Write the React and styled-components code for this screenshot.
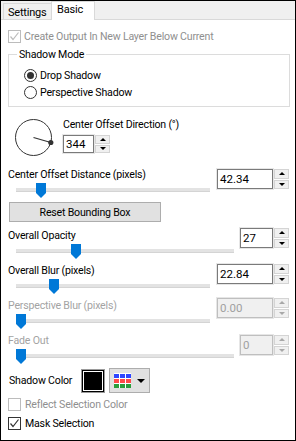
import styled, { createGlobalStyle } from "styled-components";

const GlobalStyle = createGlobalStyle`
  body {
    margin: 0;
    font-family: Roboto, "Liberation Sans", Arial, sans-serif;
    font-size: 10.6px;
    letter-spacing: -0.2px;
    color: #000;
  }
`;

const Window = styled.div`
  width: 296px;
  height: 441px;
  box-sizing: border-box;
  border: 1px solid #000;
  background: #f0f0f0;
  display: flex;
  flex-direction: column;
`;

const TabBar = styled.div`
  height: 18px;
  display: flex;
  align-items: flex-end;
  padding-left: 2px;
  border-bottom: 1px solid #d9d9d9;
`;

const Tab = styled.div`
  box-sizing: border-box;
  width: ${(p) => p.$width}px;
  height: ${(p) => (p.$active ? 19 : 16)}px;
  margin-bottom: ${(p) => (p.$active ? -1 : 0)}px;
  padding-left: ${(p) => p.$pad}px;
  padding-top: ${(p) => (p.$active ? 1 : 2)}px;
  line-height: 13px;
  font-size: 11px;
  white-space: nowrap;
  background: ${(p) => (p.$active ? "#fff" : "#f0f0f0")};
  border: 1px solid #d9d9d9;
  border-bottom: none;
  ${(p) => (p.$active ? "" : "border-right: none;")}
`;

const Panel = styled.div`
  flex: 1;
  background: #fff;
  padding: 0 6px 0 7px;
  display: flex;
  flex-direction: column;
`;

const CheckRow = styled.label`
  display: flex;
  align-items: center;
  gap: ${(p) => p.$gap || 3}px;
  height: 13px;
  margin-top: ${(p) => p.$top}px;
  color: ${(p) => (p.$disabled ? "#8f8f8f" : "#000")};
  white-space: nowrap;
`;

const Box = styled.span`
  box-sizing: border-box;
  width: 13px;
  height: 13px;
  border: 1px solid ${(p) => (p.$disabled ? "#bcbcbc" : "#333")};
  background: #fff;
  display: flex;
  align-items: center;
  justify-content: center;
`;

const Check = ({ color }) => (
  <svg width="11" height="11" viewBox="0 0 11 11">
    <path d="M1.5 5.5 L4 8.5 L9.5 1.5" fill="none" stroke={color} strokeWidth="1.2" />
  </svg>
);

const Group = styled.fieldset`
  margin: 5px 0 0 0;
  width: 282px;
  box-sizing: border-box;
  border: 1px solid #dcdcdc;
  padding: 6px 0 5px 15px;
  display: flex;
  flex-direction: column;
`;

const Legend = styled.legend`
  padding: 0 2px;
  margin-left: -7px;
  line-height: 13px;
`;

const RadioRow = styled.label`
  display: flex;
  align-items: center;
  gap: 3px;
  height: 17px;
`;

const RadioCircle = styled.span`
  box-sizing: border-box;
  width: 13px;
  height: 13px;
  border-radius: 50%;
  border: 1px solid #333;
  display: flex;
  align-items: center;
  justify-content: center;
  &::after {
    content: "";
    width: 7px;
    height: 7px;
    border-radius: 50%;
    background: ${(p) => (p.$on ? "#333" : "transparent")};
  }
`;

const DialRow = styled.div`
  display: flex;
  margin-top: 11px;
  gap: 8px;
`;

const DialArt = styled.svg`
  margin: 1px 0 0 7px;
  flex: none;
`;

const DialSide = styled.div`
  display: flex;
  flex-direction: column;
  gap: 3px;
`;

const Label = styled.div`
  height: 14px;
  line-height: 14px;
  white-space: nowrap;
  color: ${(p) => (p.$disabled ? "#a3a3a3" : "#000")};
`;

const Block = styled.div`
  display: flex;
  justify-content: space-between;
  align-items: flex-start;
  margin-top: ${(p) => p.$top}px;
`;

const LeftCol = styled.div`
  display: flex;
  flex-direction: column;
`;

const SliderWrap = styled.div`
  position: relative;
  height: 15px;
  margin-left: 8px;
  width: ${(p) => p.$width}px;
`;

const Track = styled.div`
  margin-top: 6px;
  height: 3px;
  background: #e3e3e3;
  border-bottom: 1px solid #d4d4d4;
`;

const Thumb = styled.div`
  position: absolute;
  top: 1px;
  width: 10px;
  height: 15px;
  background: #0078d7;
  clip-path: polygon(0 0, 100% 0, 100% 66%, 50% 100%, 0 66%);
`;

const Slider = ({ width, at }) => (
  <SliderWrap $width={width}>
    <Track />
    <Thumb style={{ left: at }} />
  </SliderWrap>
);

const Spin = styled.div`
  display: flex;
  gap: 1px;
  margin-top: ${(p) => p.$top || 0}px;
`;

const SpinInput = styled.div`
  box-sizing: border-box;
  width: ${(p) => p.$width}px;
  height: ${(p) => p.$h}px;
  border: 1px solid ${(p) => (p.$disabled ? "#bfbfbf" : "#7a7a7a")};
  box-shadow: 0 0 0 1px #e6e6e6;
  background: ${(p) => (p.$disabled ? "#f0f0f0" : "#fff")};
  color: ${(p) => (p.$disabled ? "#a0a0a0" : "#000")};
  font-size: 11.5px;
  letter-spacing: 0;
  line-height: ${(p) => p.$h - 2}px;
  padding-left: 2px;
`;

const SpinButtons = styled.div`
  display: flex;
  flex-direction: column;
  gap: 1px;
  width: 15px;
  height: ${(p) => p.$h}px;
`;

const SpinBtn = styled.div`
  flex: 1;
  box-sizing: border-box;
  background: #f0f0f0;
  border: 1px solid #d4d4d4;
  display: flex;
  align-items: center;
  justify-content: center;
  &::after {
    content: "";
    border-left: 3px solid transparent;
    border-right: 3px solid transparent;
    ${(p) => (p.$up ? "border-bottom" : "border-top")}: 3px solid ${(p) =>
      p.$disabled ? "#a8a8a8" : "#000"};
  }
`;

const SpinBox = ({ value, width, h = 20, disabled, top }) => (
  <Spin $top={top}>
    <SpinInput $width={width} $h={h} $disabled={disabled}>
      {value}
    </SpinInput>
    <SpinButtons $h={h}>
      <SpinBtn $up $disabled={disabled} />
      <SpinBtn $disabled={disabled} />
    </SpinButtons>
  </Spin>
);

const ResetButton = styled.button`
  margin: 5px 0 0 1px;
  width: 152px;
  height: 20px;
  box-sizing: border-box;
  background: #e1e1e1;
  border: 1px solid #adadad;
  font-family: inherit;
  font-size: inherit;
  letter-spacing: inherit;
  padding: 0;
  color: #000;
`;

const ColorRow = styled.div`
  display: flex;
  align-items: center;
  height: 25px;
  margin-top: 5px;
  padding-left: 1px;
`;

const ColorLabel = styled.span`
  width: 72px;
  white-space: nowrap;
`;

const Swatch = styled.div`
  box-sizing: border-box;
  width: 24px;
  height: 24px;
  background: #000;
  border: 2px solid #000;
  box-shadow: inset 0 0 0 1px #fff;
  outline: 1px solid #9a9a9a;
  outline-offset: -1px;
`;

const PaletteButton = styled.div`
  box-sizing: border-box;
  margin-left: 4px;
  width: 41px;
  height: 25px;
  background: #e1e1e1;
  border: 1px solid #adadad;
  display: flex;
  align-items: center;
  padding-left: 4px;
  gap: 6px;
`;

const Arrow = styled.span`
  border-left: 4px solid transparent;
  border-right: 4px solid transparent;
  border-top: 4px solid #000;
`;

const PaletteIcon = () => {
  const rows = ["#2e46ff", "#ff4a4a", "#2a9d3c"];
  return (
    <svg width="17" height="15" viewBox="0 0 17 15">
      <rect width="17" height="15" fill="#fff" />
      {rows.map((c, r) =>
        [0, 1, 2].map((col) => (
          <rect key={`${r}-${col}`} x={col * 6} y={r * 5 + 1} width="5" height="4" fill={c} />
        ))
      )}
    </svg>
  );
};

const App = () => {
  return (
    <>
      <GlobalStyle />
      <Window>
        <TabBar>
          <Tab $width={48} $pad={4}>Settings</Tab>
          <Tab $active $width={44} $pad={5}>Basic</Tab>
        </TabBar>
        <Panel>
          <CheckRow $top={10} $disabled>
            <Box $disabled>
              <Check color="#bcbcbc" />
            </Box>
            Create Output In New Layer Below Current
          </CheckRow>
          <Group>
            <Legend>Shadow Mode</Legend>
            <RadioRow>
              <RadioCircle $on />
              Drop Shadow
            </RadioRow>
            <RadioRow>
              <RadioCircle />
              Perspective Shadow
            </RadioRow>
          </Group>
          <DialRow>
            <DialArt width="40" height="40" viewBox="0 0 40 40">
              <circle cx="18.5" cy="18.5" r="18" fill="none" stroke="#333" strokeWidth="1" />
              <line x1="18.5" y1="18.5" x2="35.8" y2="23.5" stroke="#333" strokeWidth="1.2" />
              <circle cx="35.8" cy="23.5" r="2.6" fill="#333" />
            </DialArt>
            <DialSide>
              <Label>Center Offset Direction (°)</Label>
              <SpinBox value="344" width={31} h={18} />
            </DialSide>
          </DialRow>
          <Block $top={9}>
            <LeftCol>
              <Label>Center Offset Distance (pixels)</Label>
              <Slider width={194} at={20} />
            </LeftCol>
            <SpinBox value="42.34" width={56} top={1} />
          </Block>
          <ResetButton>Reset Bounding Box</ResetButton>
          <Block $top={7}>
            <LeftCol>
              <Label>Overall Opacity</Label>
              <Slider width={218} at={55} />
            </LeftCol>
            <SpinBox value="27" width={33} top={-1} />
          </Block>
          <Block $top={6}>
            <LeftCol>
              <Label>Overall Blur (pixels)</Label>
              <Slider width={194} at={33} />
            </LeftCol>
            <SpinBox value="22.84" width={56} />
          </Block>
          <Block $top={6}>
            <LeftCol>
              <Label $disabled>Perspective Blur (pixels)</Label>
              <Slider width={194} at={0} />
            </LeftCol>
            <SpinBox value="0.00" width={56} disabled top={-1} />
          </Block>
          <Block $top={6}>
            <LeftCol>
              <Label $disabled>Fade Out</Label>
              <Slider width={218} at={0} />
            </LeftCol>
            <SpinBox value="0" width={33} disabled top={1} />
          </Block>
          <ColorRow>
            <ColorLabel>Shadow Color</ColorLabel>
            <Swatch />
            <PaletteButton>
              <PaletteIcon />
              <Arrow />
            </PaletteButton>
          </ColorRow>
          <CheckRow $top={5} $disabled $gap={4}>
            <Box $disabled />
            Reflect Selection Color
          </CheckRow>
          <CheckRow $top={6} $gap={4}>
            <Box>
              <Check color="#333" />
            </Box>
            Mask Selection
          </CheckRow>
        </Panel>
      </Window>
    </>
  );
};

export default App;
